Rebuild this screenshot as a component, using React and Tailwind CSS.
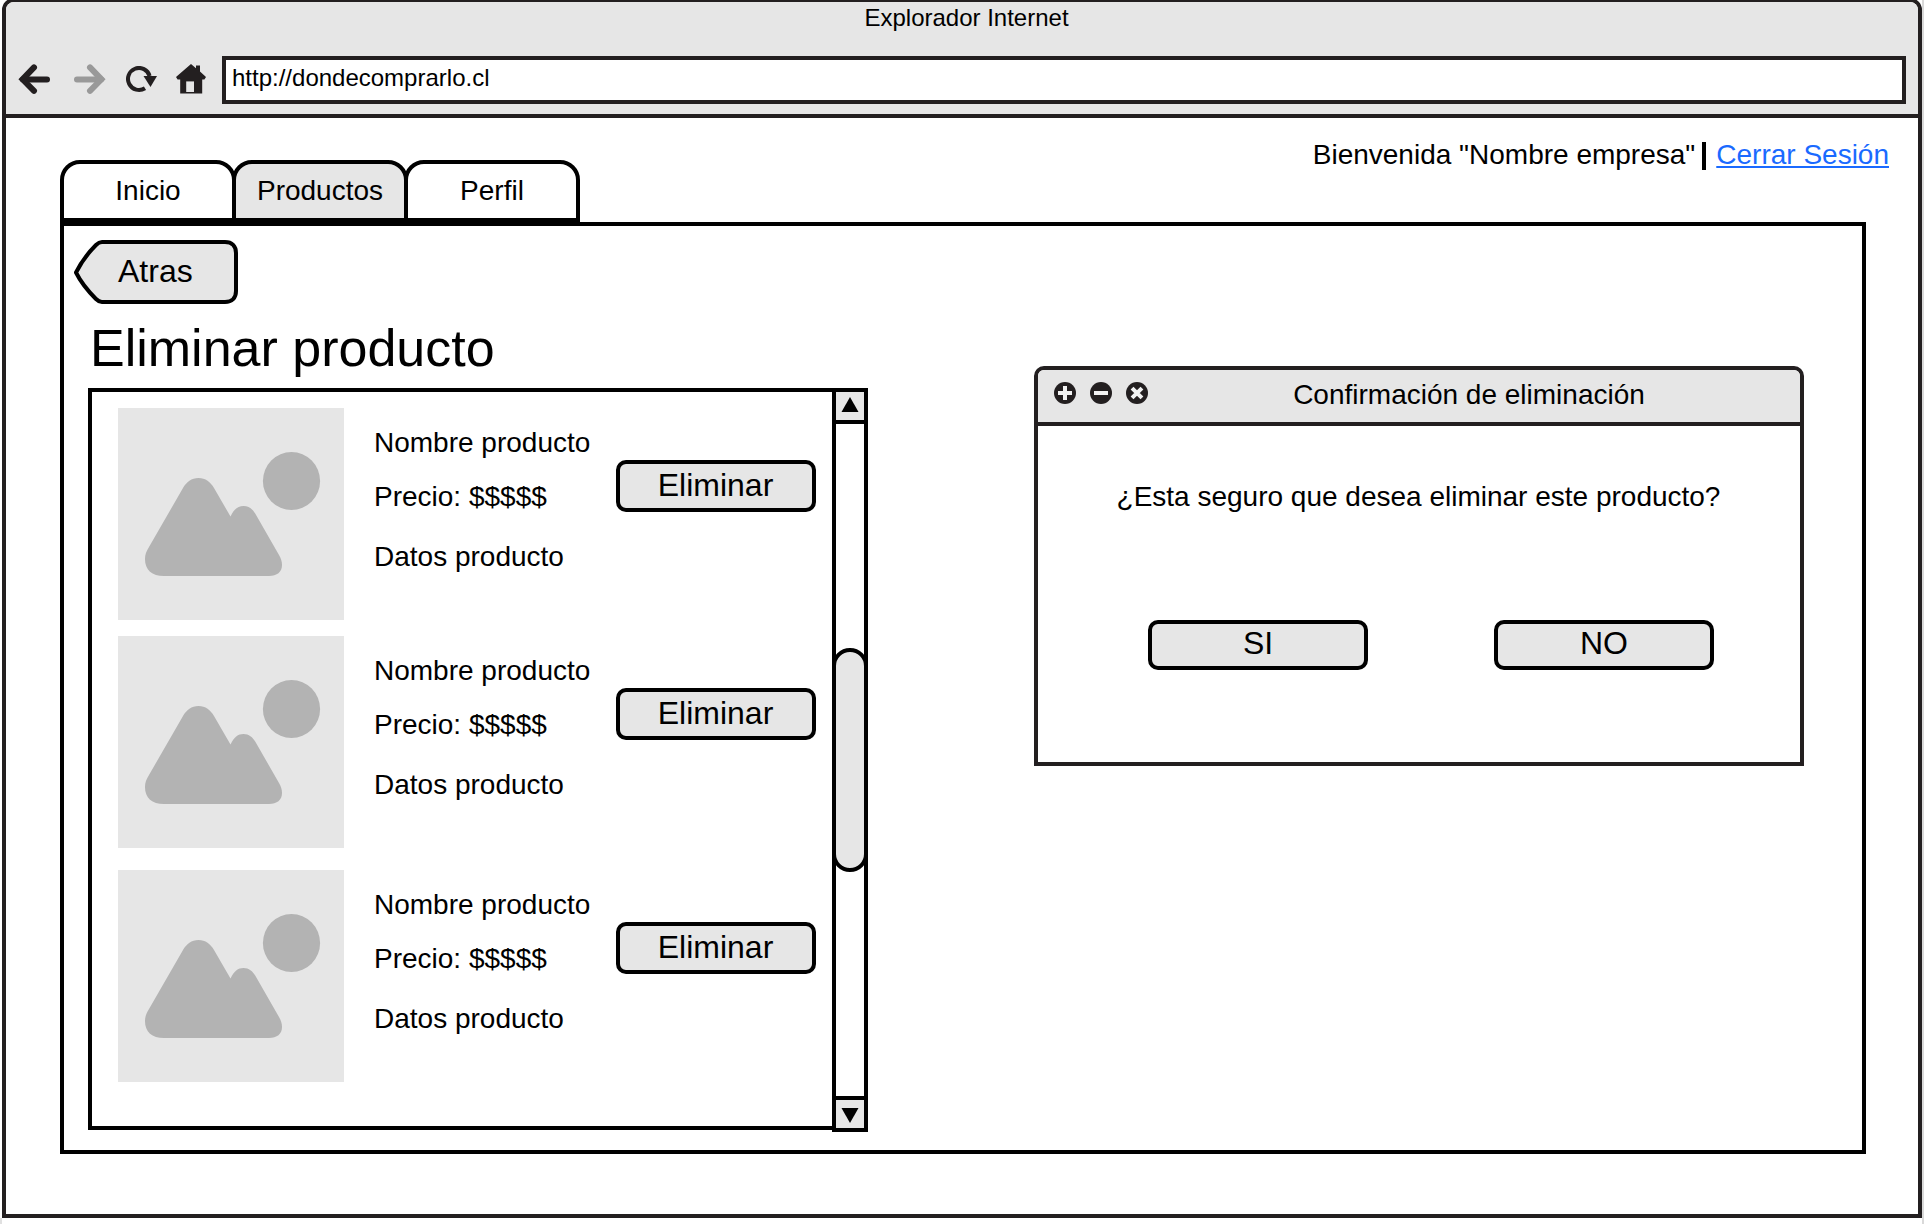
import React from "react";

const tabs = [
  { label: "Inicio", active: false },
  { label: "Productos", active: true },
  { label: "Perfil", active: false },
];

function BackIcon({ color }) {
  return (
    <svg width="34" height="32" viewBox="0 0 34 32" fill="none" stroke={color} strokeWidth="6" strokeLinecap="round" strokeLinejoin="miter">
      <path d="M5 15.6H29" />
      <path d="M16 3.400L4.600 15.300L16 26.800" />
    </svg>
  );
}

function ReloadIcon() {
  return (
    <svg width="32" height="30" viewBox="0 0 32 30">
      <path d="M19 22.200A11 11 0 1 1 23.600 10" fill="none" stroke="#231f20" strokeWidth="4" />
      <path d="M17.500 10H31L24.500 21Z" fill="#231f20" />
    </svg>
  );
}

function HomeIcon() {
  return (
    <svg width="30" height="30" viewBox="0 0 30 30" fill="#231f20">
      <path d="M15 0L20 4.2V1.4H24V7.6L30 13L28.4 15.4H26.2V29.4H4.2V15.4H1.6L0 13Z" />
      <path d="M10.2 17.4H18V28H10.2Z" fill="#e6e6e6" />
    </svg>
  );
}

function Picture() {
  return (
    <svg width="226" height="212" viewBox="0 0 226 212" className="block shrink-0 bg-[#e6e6e6]" fill="#b3b3b3">
      <ellipse cx="173.5" cy="73" rx="28.6" ry="29" />
      <path d="M27 151C27 146.500 28.500 143 31 139L65 80C68.500 74 73.500 70 80.500 70C87.500 70 92.500 74 96 80L112.500 108.500C116 101 120 98 125.500 98C131 98 134.500 101 137.500 106L161 147C163 150.500 164 153.500 164 157C164 164 159 168 151 168H46C34 168 27 162 27 151Z" />
    </svg>
  );
}

function Button({ children, className }) {
  return (
    <button className={`flex items-start justify-center rounded-[10px] border-4 border-black bg-[#e6e6e6] text-[32px] ${className}`}>
      {children}
    </button>
  );
}

function Product({ className }) {
  return (
    <div className={`flex h-[212px] ${className}`}>
      <Picture />
      <div className="ml-[30px] w-[242px] whitespace-nowrap pt-[19px] leading-8">
        <p>Nombre producto</p>
        <p className="mt-[22px]">Precio: $$$$$</p>
        <p className="mt-7">Datos producto</p>
      </div>
      <Button className="mt-[52px] h-[52px] w-[200px] pr-px leading-[43px]">Eliminar</Button>
    </div>
  );
}

function Scrollbar() {
  return (
    <div className="-mt-1 flex h-[744px] w-9 shrink-0 flex-col border-4 border-black bg-white">
      <div className="flex h-8 justify-center border-b-4 border-black bg-[#e6e6e6] pt-[5px]">
        <svg width="18" height="16" viewBox="0 0 18 16">
          <path d="M9 0L17.500 15H0.500Z" />
        </svg>
      </div>
      <div className="flex-1 pt-56">
        <div className="-mx-1 h-56 rounded-[18px] border-4 border-black bg-[#e6e6e6]" />
      </div>
      <div className="flex h-8 justify-center border-t-4 border-black bg-[#e6e6e6] pt-2">
        <svg width="18" height="16" viewBox="0 0 18 16">
          <path d="M9 15L17.500 0H0.500Z" />
        </svg>
      </div>
    </div>
  );
}

function WindowDot({ d, rotate }) {
  return (
    <svg width="22" height="22" viewBox="0 0 22 22">
      <circle cx="11" cy="11" r="11" fill="#231f20" />
      <path d={d} transform={rotate ? "rotate(45 11 11)" : undefined} stroke="#f2f2f2" strokeWidth="4" />
    </svg>
  );
}

function Dialog() {
  return (
    <section className="ml-[166px] mt-[140px] h-[400px] w-[770px] rounded-t-[10px] border-4 border-[#231f20] bg-white">
      <header className="flex h-14 items-start rounded-t-[6px] border-b-4 border-[#231f20] bg-[#e6e6e6] pl-4">
        <div className="flex gap-[14px] pt-3">
          <WindowDot d="M4 11H18M11 4V18" />
          <WindowDot d="M4 11H18" />
          <WindowDot d="M4 11H18M11 4V18" rotate />
        </div>
        <h2 className="flex-1 pr-[10px] pt-[9px] text-center leading-8">Confirmación de eliminación</h2>
      </header>
      <p className="pr-px pt-[55px] text-center leading-8">¿Esta seguro que desea eliminar este producto?</p>
      <div className="mt-[107px] flex gap-[126px] pl-[110px]">
        <Button className="h-[50px] w-[220px] leading-[39px]">SI</Button>
        <Button className="h-[50px] w-[220px] leading-[39px]">NO</Button>
      </div>
    </section>
  );
}

export default function App() {
  return (
    <div className="h-[1224px] w-[1924px] overflow-hidden bg-white font-['Liberation_Sans',Arial,sans-serif] text-[28px] text-black">
      <div className="flex h-[1224px] w-[1924px] border-r-2 border-[#d9d9d9]">
        <div className="h-1.5 w-0.5 self-end bg-[#e0e0e0]" />
        <div className="-mt-0.5 h-[1220px] w-[1920px] rounded-t-[12px] border-4 border-[#231f20] bg-white">
          <header className="h-[116px] rounded-t-[8px] border-b-4 border-[#231f20] bg-[#e6e6e6]">
            <h1 className="h-[54px] pl-[9px] pt-0.5 text-center text-[24px] leading-7">Explorador Internet</h1>
            <div className="flex pl-3">
              <div className="flex w-[204px] items-start pt-2">
                <BackIcon color="#231f20" />
                <div className="ml-5 -scale-x-100">
                  <BackIcon color="#999999" />
                </div>
                <div className="ml-5 mt-0.5">
                  <ReloadIcon />
                </div>
                <div className="ml-[18px]">
                  <HomeIcon />
                </div>
              </div>
              <div className="h-12 w-[1684px] border-4 border-[#231f20] bg-white pl-1.5 text-[24px] leading-9">
                http://dondecomprarlo.cl
              </div>
            </div>
          </header>
          <main className="pl-[54px]">
            <div className="flex h-[104px] justify-between">
              <nav className="mt-[42px] flex">
                {tabs.map((t) => (
                  <div
                    key={t.label}
                    className={`-mr-1 h-[62px] w-[176px] rounded-t-[20px] border-4 border-black text-center leading-[53px] ${t.active ? "bg-[#e6e6e6]" : "bg-white"}`}
                  >
                    {t.label}
                  </div>
                ))}
              </nav>
              <div className="mr-[29px] flex whitespace-nowrap pt-[21px] leading-8">
                <span>Bienvenida "Nombre empresa"</span>
                <span className="ml-[7px] mr-[10px] mt-[3px] h-7 w-1 bg-black" />
                <a className="text-[#1a6aff] underline decoration-2 underline-offset-2">Cerrar Sesión</a>
              </div>
            </div>
            <div className="flex h-[932px] w-[1806px] border-4 border-black">
              <div className="w-[804px] shrink-0">
                <div className="ml-[10px] mt-[14px] grid h-16 w-[164px]">
                  <svg width="164" height="64" viewBox="0 0 164 64" className="col-start-1 row-start-1">
                    <path
                      d="M28 2H151C158 2 162 6 162 13V51C162 58 158 62 151 62H28C25.500 62 23.500 60.500 22 59C14 51 6.500 41.500 2 32.500C6.500 23.500 14 13 22 5C23.500 3.500 25.500 2 28 2Z"
                      fill="#e6e6e6"
                      stroke="#000"
                      strokeWidth="4"
                    />
                  </svg>
                  <span className="z-10 col-start-1 row-start-1 pl-11 text-[32px] leading-[62px]">Atras</span>
                </div>
                <h2 className="ml-[26px] h-[84px] pt-[14px] text-[52px] leading-[60px]">Eliminar producto</h2>
                <div className="ml-6 flex h-[742px] w-[780px] items-start">
                  <div className="flex h-[742px] w-[744px] flex-col border-y-4 border-l-4 border-black pl-[26px] pt-4">
                    <Product />
                    <Product className="mt-4" />
                    <Product className="mt-[22px]" />
                  </div>
                  <div className="pt-1">
                    <Scrollbar />
                  </div>
                </div>
              </div>
              <Dialog />
            </div>
          </main>
        </div>
      </div>
    </div>
  );
}
